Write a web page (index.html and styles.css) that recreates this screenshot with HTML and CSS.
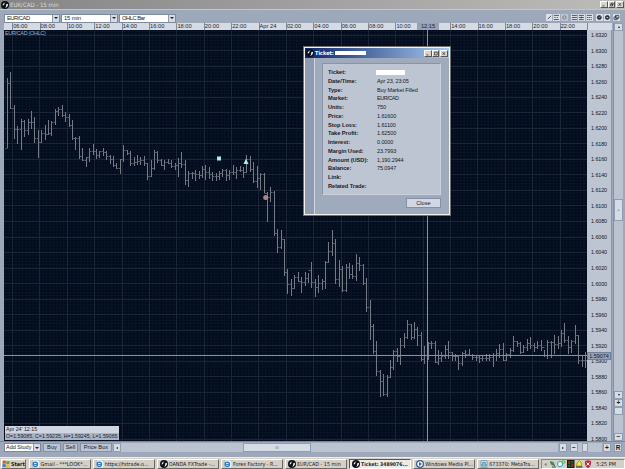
FILE: index.html
```html
<!DOCTYPE html>
<html lang="en">
<head>
<meta charset="utf-8">
<title>EUR/CAD - 15 min</title>
<link rel="stylesheet" href="styles.css">
</head>
<body>
<svg width="0" height="0" class="defs">
  <symbol id="globe" viewBox="0 0 8 8"><circle cx="4" cy="4" r="4" fill="#0b0f16"/><path d="M1.3 4.2Q2 1.5 4.8 1.2Q3 2.4 3 4.3ZM5 3.4L7 2.8Q7.4 5.8 4.2 7Q5.6 5.2 5 3.4Z" fill="#e8edf2"/></symbol>
  <symbol id="ie" viewBox="0 0 8 8"><path d="M1 0H6L8 2V8H1Z" fill="#eef6fc" stroke="#8ba0b2" stroke-width=".5"/><circle cx="3.3" cy="4.3" r="2.2" fill="none" stroke="#267cc4" stroke-width="1.3"/><path d="M1.5 4.4H5.3" stroke="#267cc4"/></symbol>
  <symbol id="media" viewBox="0 0 8 8"><circle cx="4" cy="4" r="3.4" fill="#fff" stroke="#315a9a" stroke-width="1.2"/><path d="M3 2L6 4L3 6Z" fill="#27679f"/></symbol>
</svg>
<div class="app">
  <header class="titlebar">
    <svg class="logo"><use href="#globe"/></svg><span class="grow">EUR/CAD - 15 min</span>
    <span class="winbtns"><i><svg viewBox="0 0 8 7"><path d="M2 5.5H5"/></svg></i><i><svg viewBox="0 0 8 7"><path d="M3 3V1.5H6V4H5M2 3.2H5V5.6H2Z"/></svg></i><i class="x"><svg viewBox="0 0 8 7"><path d="M2.2 1.5L5.8 5.5M5.8 1.5L2.2 5.5"/></svg></i></span>
  </header>
  <div class="toolbar">
    <div class="select s1"><span>EUR/CAD</span><b></b></div>
    <div class="select s2"><span>15 min</span><b></b></div>
    <div class="select s3"><span>OHLC Bar</span><b></b></div>
    <div class="tools">
      <i><svg viewBox="0 0 8 8"><path d="M2 6L6 2"/></svg></i><i><svg viewBox="0 0 8 8"><path d="M1 1.5H7M1 6.5H7"/><path d="M1 4H7" stroke-dasharray="1"/></svg></i><i class="off"><svg viewBox="0 0 8 8"><circle cx="4" cy="4" r="2"/></svg></i>
      <i class="gap"><svg viewBox="0 0 8 8"><path d="M1 1.5H7M1 4H7M1 6.5H7"/></svg></i><i><svg viewBox="0 0 8 8"><path d="M1 1.5H7M1 6.5H7M1 4H7M4 3V5"/></svg></i><i><svg viewBox="0 0 8 8"><path d="M1 1.5H7"/><path d="M1 4H7M1 6.5H7" stroke-dasharray="1.5 .7"/></svg></i>
      <i class="gap"><svg viewBox="0 0 8 8"><circle class="dot" cx="4" cy="4" r="2.4"/><path d="M4 4L5 3" stroke="#fff"/></svg></i><i><svg viewBox="0 0 8 8"><circle class="dot" cx="4" cy="4" r="2.4"/><path d="M3 4H5" stroke="#fff"/></svg></i>
      <i class="gap"><svg viewBox="0 0 8 8"><path d="M3 1.5H7V5H3ZM1.3 3.3H5V6.6H1.3Z"/></svg></i>
    </div>
  </div>
  <div class="workspace">
    <div class="left">
      <div class="times"><span class="hot">12:15</span></div>
      <div class="middle">
        <div class="plot">
          <svg id="chart" width="583" height="411" viewBox="4 30 583 411"></svg>
          <span class="pair">EUR/CAD (OHLC)</span>
          <div class="info"><div>Apr 24' 12:15</div><div>O=1.59085, C=1.59235, H=1.59245, L=1.59065</div></div>
        </div>
        <div class="prices"><span class="last">1.59074</span></div>
      </div>
    </div>
    <div class="vscroll">
      <i class="btn"><b class="up"></b></i><div class="track t1"></div><div class="thumb vthumb">=</div><div class="track t2"></div><i class="btn"><b class="down"></b></i>
      <i class="btn">+</i><div class="thumb zthumb"></div><div class="track t3"></div><i class="btn">−</i>
    </div>
  </div>
  <div class="bottom">
    <div class="select study"><span>Add Study</span><b></b></div>
    <button class="buy">Buy</button><button class="sell">Sell</button><button class="box">Price Box</button>
    <i class="btn"><b class="prev"></b></i><div class="track h1"></div><div class="thumb hthumb">III</div><div class="track h2"></div><i class="btn"><b class="next"></b></i>
    <i class="btn zoom">−</i><div class="track h3"></div><div class="thumb zh"></div><div class="track h4"></div><i class="btn">+</i><i class="btn zoom">R</i>
  </div>
  <footer class="taskbar">
    <div class="task start"><svg viewBox="0 0 8 8"><path d="M1 1Q2.3 .2 3.8 1V3.8Q2.4 3 .7 3.8Z" fill="#e5532c"/><path d="M4.3 1.1Q5.6 1.8 7.5 1V3.8Q6 4.7 4.3 3.9Z" fill="#5aa83b"/><path d="M.6 4.4Q2 3.7 3.8 4.4V7.2Q2 6.5 .4 7.2Z" fill="#397ed0"/><path d="M4.3 4.5Q6 5.2 7.4 4.4V7.2Q6 8 4.3 7.3Z" fill="#efba25"/></svg>Start</div>
    <div class="task"><svg><use href="#ie"/></svg><span>Gmail - ***LOOK*...</span></div>
    <div class="task"><svg><use href="#ie"/></svg><span>https://fxtrade.o...</span></div>
    <div class="task"><svg><use href="#globe"/></svg><span>OANDA FXTrade -...</span></div>
    <div class="task"><svg><use href="#ie"/></svg><span>Forex Factory - R...</span></div>
    <div class="task"><svg><use href="#globe"/></svg><span>EUR/CAD - 15 min</span></div>
    <div class="task active"><svg><use href="#globe"/></svg><span>Ticket: 3489076...</span></div>
    <div class="task"><svg><use href="#media"/></svg><span>Windows Media Pl...</span></div>
    <div class="task"><svg viewBox="0 0 8 8"><path d="M1 .5H7V7.5H1Z" fill="#dfeef5" stroke="#608ca4" stroke-width=".7"/><path d="M2 3Q4 1 6 3M2 6V4H6V6Z" stroke="#3987b5" fill="none"/></svg><span>673370: MetaTra...</span></div>
    <div class="tray"><span>«</span>
      <svg viewBox="0 0 43 8"><path d="M1 1L5 2L6 6L2 5Z" fill="#48a952"/><path d="M1 2L6 6M3 7H7" stroke="#3c5965"/><circle cx="11" cy="4" r="2.6" fill="#e4f7ff" stroke="#39a1cb"/><circle cx="14.5" cy="2" r="1.4" fill="none" stroke="#45c143"/><path d="M18 0H25.5V8H18Z" fill="#152115"/><path d="M19 1H21.5V4H19ZM22 4H24.5V7H22Z" fill="#972222"/><path d="M22 1H24.5V3.5H22ZM19 4.5H21.5V7H19Z" fill="#166423"/><path d="M27 6L28 3L30.5 .5L32.5 3V6Z" fill="#eee630" stroke="#6d6a16" stroke-width=".5"/><path d="M27 7H33.5" stroke="#222"/><path d="M36 1L39 .3L42 1V4Q41.5 7 39 8Q36.5 7 36 4Z" fill="#bf263d"/><path d="M37.5 2.5L40.5 5.5M40.5 2.5L37.5 5.5" stroke="#fff"/></svg>
      <span>5:25 PM</span></div>
  </footer>
</div>
<section class="dialog">
  <header><svg><use href="#globe"/></svg><b>Ticket:</b><em></em><span class="winbtns"><i><svg viewBox="0 0 8 7"><path d="M2 5.5H5"/></svg></i><i><svg viewBox="0 0 8 7"><path d="M2 1.5H6V5.5H2Z"/></svg></i><i class="x"><svg viewBox="0 0 8 7"><path d="M2.2 1.5L5.8 5.5M5.8 1.5L2.2 5.5"/></svg></i></span></header>
  <div class="dbody">
    <div class="rail"></div>
    <div class="content">
      <dl>
        <dt>Ticket:</dt><dd><em></em></dd>
        <dt>Date/Time:</dt><dd>Apr 23, 23:05</dd>
        <dt>Type:</dt><dd>Buy Market Filled</dd>
        <dt>Market:</dt><dd class="caps">EUR/CAD</dd>
        <dt>Units:</dt><dd>750</dd>
        <dt>Price:</dt><dd>1.61600</dd>
        <dt>Stop Loss:</dt><dd>1.61100</dd>
        <dt>Take Profit:</dt><dd>1.62500</dd>
        <dt>Interest:</dt><dd>0.0000</dd>
        <dt>Margin Used:</dt><dd>23.7993</dd>
        <dt>Amount (USD):</dt><dd>1,190.2944</dd>
        <dt>Balance:</dt><dd>75.0947</dd>
        <dt>Link:</dt><dd></dd>
        <dt>Related Trade:</dt><dd></dd>
      </dl>
      <button>Close</button>
    </div>
  </div>
</section>
<script src="chart.js"></script>
</body>
</html>
```
FILE: styles.css
```css
* { box-sizing: border-box; }
body { margin: 0; width: 625px; height: 469px; overflow: hidden; position: relative; background: #9da8ba; font: 5.8px/7px "Liberation Sans", sans-serif; color: #181c24; }
i { font-style: normal; }
.defs { position: absolute; }
.app { display: flex; flex-direction: column; width: 625px; height: 469px; }
.titlebar { display: flex; align-items: center; height: 9px; padding: 0 1px; background: linear-gradient(90deg, #858585, #bdbcb9); color: #dcdcdc; font: 6px/9px "DejaVu Sans Condensed", "DejaVu Sans", sans-serif; }
.logo { width: 8px; height: 8px; margin-right: 1px; }
.grow { flex: 1; }
.winbtns { display: flex; }
.winbtns i { width: 7.6px; height: 7px; background: #d8d5cf; border: solid #fff; border-width: .5px; border-right-color: #555; border-bottom-color: #555; display: flex; }
.winbtns .x { margin-left: 1px; }
.winbtns svg { width: 100%; height: 100%; fill: none; stroke: #111; stroke-width: .9; }
.toolbar { display: flex; align-items: center; height: 14px; padding: 3px 4px 0; border-top: 1px solid #c2c7d0; }
.select { display: flex; height: 9px; background: #fff; border: 1px solid #7d899d; }
.select span { flex: 1; padding-left: 2px; line-height: 7px; }
.toolbar .select span { letter-spacing: -.5px; }
.toolbar .s2 span { letter-spacing: -.1px; }
.select b { width: 7px; height: 7px; background: #d5dae4; border-left: 1px solid #8f9aae; display: flex; align-items: center; justify-content: center; }
.select b::after { content: ""; border: 2px solid transparent; border-top: 2.5px solid #222; border-bottom: 0; }
.s1 { width: 56px; } .s2 { width: 57px; margin-left: 1px; } .s3 { width: 57px; margin-left: 1px; }
.tools { display: flex; margin-left: auto; }
.tools i { width: 7.7px; height: 8px; background: #dde2ea; border-right: 1px solid #a3adbe; border-bottom: 1px solid #97a2b4; display: flex; }
.tools .off { opacity: .5; }
.tools .gap { margin-left: 2.1px; }
.tools svg { width: 100%; height: 100%; fill: none; stroke: #222834; stroke-width: .9; }
.tools .dot { fill: #333b47; }
.workspace { display: flex; height: 418px; padding-left: 4px; }
.left { width: 608px; }
.times { height: 7px; display: flex; padding-left: 8.2px; position: relative; background: #d5dae3; color: #22262e; font-size: 5.7px; overflow: hidden; }
.times .cell { width: 27.38px; flex: none; border-left: 1px solid #808a9a; padding-left: 0; white-space: nowrap; }
.times .hot { position: absolute; left: 413px; width: 22px; height: 7px; text-align: center; background: #95a2b9; }
.middle { display: flex; height: 411px; }
.plot { position: relative; width: 583px; background: #020b1c; }
.plot svg { display: block; }
.pair { position: absolute; left: 1px; top: 0; color: #a7b0bd; font-size: 5.4px; line-height: 6px; letter-spacing: -.28px; }
.info { position: absolute; left: 1px; bottom: 1px; width: 114px; height: 14px; background: #d0d6e1; font-size: 5.25px; line-height: 7px; white-space: nowrap; }
.info div { padding-left: 1px; height: 7px; }
.info div + div { background: #aab5c9; }
.prices { position: relative; width: 25px; height: 411px; background: #bdc4d2; border-right: 1px solid #8a95a9; overflow: hidden; display: flex; flex-direction: column; font-size: 5.4px; padding-top: 1px; }
.prices .cell { flex: none; height: 15.54px; line-height: 8px; text-align: right; padding-right: 4px; letter-spacing: -.1px; }
.prices .last { position: absolute; top: 322px; left: 0; width: 24px; text-align: center; background: #93a1b8; border: .5px solid #718099; line-height: 6px; }
.vscroll { width: 10px; margin-left: 1px; height: 418px; display: flex; flex-direction: column; border-left: 1px solid #8791a4; }
.btn, .thumb { flex: none; display: flex; align-items: center; justify-content: center; background: #d6dce6; border: 1px solid #919db1; font-weight: bold; font-size: 6.5px; line-height: 6px; overflow: hidden; }
.vscroll .btn { height: 8px; }
.btn b { border: 1.5px solid transparent; }
.up { border-bottom: 2px solid #222 !important; border-top: 0 !important; }
.down { border-top: 2px solid #222 !important; border-bottom: 0 !important; }
.prev { border-right: 2px solid #222 !important; border-left: 0 !important; }
.next { border-left: 2px solid #222 !important; border-right: 0 !important; }
.track { background: #bbc3d1; }
.thumb { color: #66728a; font-weight: normal; font-size: 4px; }
.t1 { height: 168px; } .vthumb { height: 22px; } .t2 { height: 170px; } .zthumb { height: 8px; } .t3 { flex: 1; }
.bottom { height: 16px; padding: 1px 3px 5px 4px; display: flex; border-top: 1px solid #7c879a; background: #9da8ba; }
.bottom .select { width: 37px; height: 9px; }
.bottom .select span { padding-left: 1px; white-space: nowrap; font-size: 5.5px; }
button { font: 5.7px/7px "Liberation Sans", sans-serif; height: 9px; margin: 0 0 0 2px; padding: 0; color: #181c24; background: #bac4d5; border: 1px solid #8390a6; }
.buy { width: 18px; } .sell { width: 15px; } .box { width: 32px; }
.bottom .btn { width: 8px; height: 9px; margin-left: 1px; }
.bottom .track, .bottom .thumb { height: 9px; }
.h1 { width: 122px; } .hthumb { width: 68px; } .h2 { flex: 1; } .h3 { width: 4px; } .zh { width: 6px; } .h4 { width: 14px; }
.bottom .zoom { margin-left: 3px; }
.taskbar { height: 12px; display: flex; align-items: center; gap: 2.1px; padding: 1px 0 0 1px; background: #d4d0c8; border-top: 1px solid #efede9; font: 5.4px/9px "DejaVu Sans Condensed", "DejaVu Sans", sans-serif; }
.task { width: 62px; height: 10px; flex: none; display: flex; align-items: center; padding-left: 2px; border: 1px solid; border-color: #fff #6b6863 #6b6863 #fff; white-space: nowrap; overflow: hidden; }
.task svg { width: 8px; height: 8px; flex: none; margin-right: 1px; }
.start { width: 25px; padding-left: 0; font-weight: bold; font-size: 5.4px; margin-right: .5px; }
.active { background: #eeebe5; border-color: #555 #fff #fff #555; font-weight: bold; font-size: 5.1px; }
.tray { flex: 1; height: 10px; display: flex; align-items: center; padding: 0 5px 0 2px; border: 1px solid; border-color: #8b8881 #fff #fff #8b8881; white-space: nowrap; }
.tray svg { width: 43px; height: 8px; margin: 0 4px 0 2px; fill: none; }
.dialog { position: absolute; left: 303px; top: 46px; width: 148px; height: 170px; border: 1px solid #77716b; box-shadow: inset 0 0 0 1px #f4f1ec; padding: 1px; background: #9faabd; }
.dialog header { height: 10px; display: flex; align-items: center; padding: 0 1px; background: linear-gradient(90deg, #0a246a, #a6caf0); color: #fff; font: 5.5px/9px "DejaVu Sans Condensed", sans-serif; }
.dialog header > svg { width: 8px; height: 8px; margin-right: 1px; }
.dialog header em { width: 31px; height: 4px; background: #fff; margin-left: 1px; }
.dialog .winbtns { margin-left: auto; }
.dbody { display: flex; height: 156px; }
.rail { width: 10px; background: #8f9bb1; border-right: 1px solid #d0d7e2; }
.content { flex: 1; padding: 5px 8px 0 7px; display: flex; flex-direction: column; align-items: flex-end; }
dl { margin: 0; width: 119px; height: 132px; padding: 4px 0 0 5px; display: grid; grid-template-columns: 49px 1fr; grid-auto-rows: 8.78px; background: #bdc5d3; border: 1px solid #8994a8; border-right-color: #cbd2de; border-bottom-color: #cbd2de; line-height: 8.78px; font-size: 5.5px; white-space: nowrap; }
dt { font-weight: bold; font-size: 5.7px; letter-spacing: -.05px; }
dd { margin: 0; letter-spacing: -.1px; }
dd.caps { letter-spacing: -.45px; }
dd em { display: block; width: 29px; height: 5px; margin: 2px 0 0 -1px; background: #fff; }
.content button { width: 35px; height: 10px; margin-top: 3px; background: #d1d8e3; }
```
FILE: chart.js
```js
const NS = 'http://www.w3.org/2000/svg';
const chart = document.getElementById('chart');
function add(tag, attrs) {
  const el = document.createElementNS(NS, tag);
  for (const k in attrs) el.setAttribute(k, attrs[k]);
  chart.appendChild(el);
}
function lines(d, stroke, width) { add('path', { d: d, stroke: stroke, 'stroke-width': width || 1, fill: 'none' }); }

// Fine grid, then major grid
let fine = '', major = '';
for (let x = 5.6; x < 587; x += 3.4225) fine += `M${x} 30V441`;
for (let y = 31.4; y < 441; y += 3.108) fine += `M4 ${y}H587`;
for (let i = 0; i < 21; i++) major += `M${Math.round(12 + i * 27.38) + .5} 30V441`;
for (let i = 0; i < 27; i++) major += `M4 ${Math.round(34.5 + i * 15.54) + .5}H587`;
lines(fine, '#091526');
lines(major, '#1a2636');

// OHLC bars: high, low, close in plot units, 15 minutes apart
const bars = [
[78,148,83],[72,109,108],[105,139,129],[126,144,129],[119,150,121],[120,137,130],[119,135,122],[111,129,122],[117,143,138],[130,158,142],[130,143,133],[125,140,134],[120,135,133],[121,136,122],[109,125,111],[107,116,109],[105,117,115],[112,122,117],[114,127,125],[120,140,138],[137,150,138],[136,159,156],[148,161,160],[157,167,157],[148,162,151],[144,155,151],[149,159,155],[151,158,151],[148,156,152],[151,160,156],[155,164,159],[156,167,165],[163,169,168],[159,174,159],[145,162,150],[150,155,153],[151,166,163],[157,166,162],[155,165,161],[157,165,160],[156,166,163],[163,180,176],[160,177,168],[150,170,152],[151,163,160],[159,166,165],[160,170,162],[159,164,163],[160,168,166],[163,170,165],[158,177,163],[152,168,164],[160,185,180],[171,187,173],[172,179,173],[170,181,174],[171,179,175],[166,178,169],[165,180,172],[167,179,174],[172,181,176],[173,181,176],[171,180,173],[169,177,170],[169,181,175],[170,180,172],[165,175,172],[167,179,170],[166,172,170],[167,178,172],[155,173,159],[156,172,169],[162,183,181],[166,188,178],[173,190,174],[173,193,193],[192,222,197],[187,202,192],[191,236,233],[229,253,247],[230,249,239],[239,276,272],[269,294,284],[279,296,288],[275,289,277],[272,282,281],[277,293,282],[272,286,278],[273,283,270],[262,288,282],[279,297,287],[275,293,283],[279,290,281],[261,289,262],[242,263,251],[230,256,243],[239,284,279],[260,287,269],[266,292,290],[264,292,267],[263,279,274],[265,279,276],[254,281,263],[257,271,265],[264,285,283],[278,312,307],[300,340,326],[324,354,351],[341,376,371],[370,397,381],[374,396,394],[375,397,377],[360,378,367],[350,370,351],[348,362,356],[338,365,345],[333,348,337],[320,339,324],[324,340,337],[322,339,329],[327,346,335],[332,361,359],[346,364,355],[342,360,343],[341,349,343],[341,363,362],[350,365,358],[352,362,356],[345,359,349],[341,359,352],[352,361,356],[354,361,356],[356,370,363],[352,366,353],[350,358,354],[349,355,355],[354,360,357],[355,361,357],[355,363,358],[355,361,358],[354,361,358],[354,361,357],[353,367,355],[349,361,353],[344,358,349],[343,361,360],[353,361,354],[348,358,350],[336,352,341],[341,347,343],[342,354,352],[345,353,347],[339,351,343],[337,349,345],[343,352,347],[341,349,345],[340,351,347],[350,357,355],[340,359,342],[341,358,342],[335,354,344],[336,349,343],[330,347,333],[323,343,340],[336,354,347],[340,353,341],[325,344,335],[335,364,360],[355,367,360],[352,368,360]];
let stems = '', ticks = '', prev = 148;
const step = (585.5 - 7.5) / (bars.length - 1);
bars.forEach((b, i) => {
  const x = Math.round(7 + i * step) + .5;
  stems += `M${x} ${b[0]}V${b[1]}`;
  ticks += `M${x - 2} ${prev + .5}H${x}M${x} ${b[2] + .5}H${x + 1.5}`;
  prev = b[2];
});
lines(stems, '#757a84');
lines(ticks, '#666d79', .8);
lines('M427.5 30V441M4 355.5H587', '#8b929e');
add('rect', { x: 217, y: 156.5, width: 4, height: 4, fill: '#a6eef2' });
add('path', { d: 'M246 158.5L248.5 164H243.5Z', fill: '#a6eef2' });
add('circle', { cx: 265.7, cy: 197.4, r: 2.5, fill: '#b58080' });

function cells(selector, labels) {
  const host = document.querySelector(selector);
  labels.forEach(t => {
    const s = document.createElement('span');
    s.className = 'cell';
    s.textContent = t;
    host.appendChild(s);
  });
}
cells('.times', ['06:00','08:00','10:00','12:00','14:00','16:00','18:00','20:00','22:00','Apr 24','02:00','04:00','06:00','08:00','10:00','','14:00','16:00','18:00','20:00','22:00','']);
cells('.prices', Array.from({ length: 27 }, (_, i) => (1.632 - i * .002).toFixed(4)));
```
